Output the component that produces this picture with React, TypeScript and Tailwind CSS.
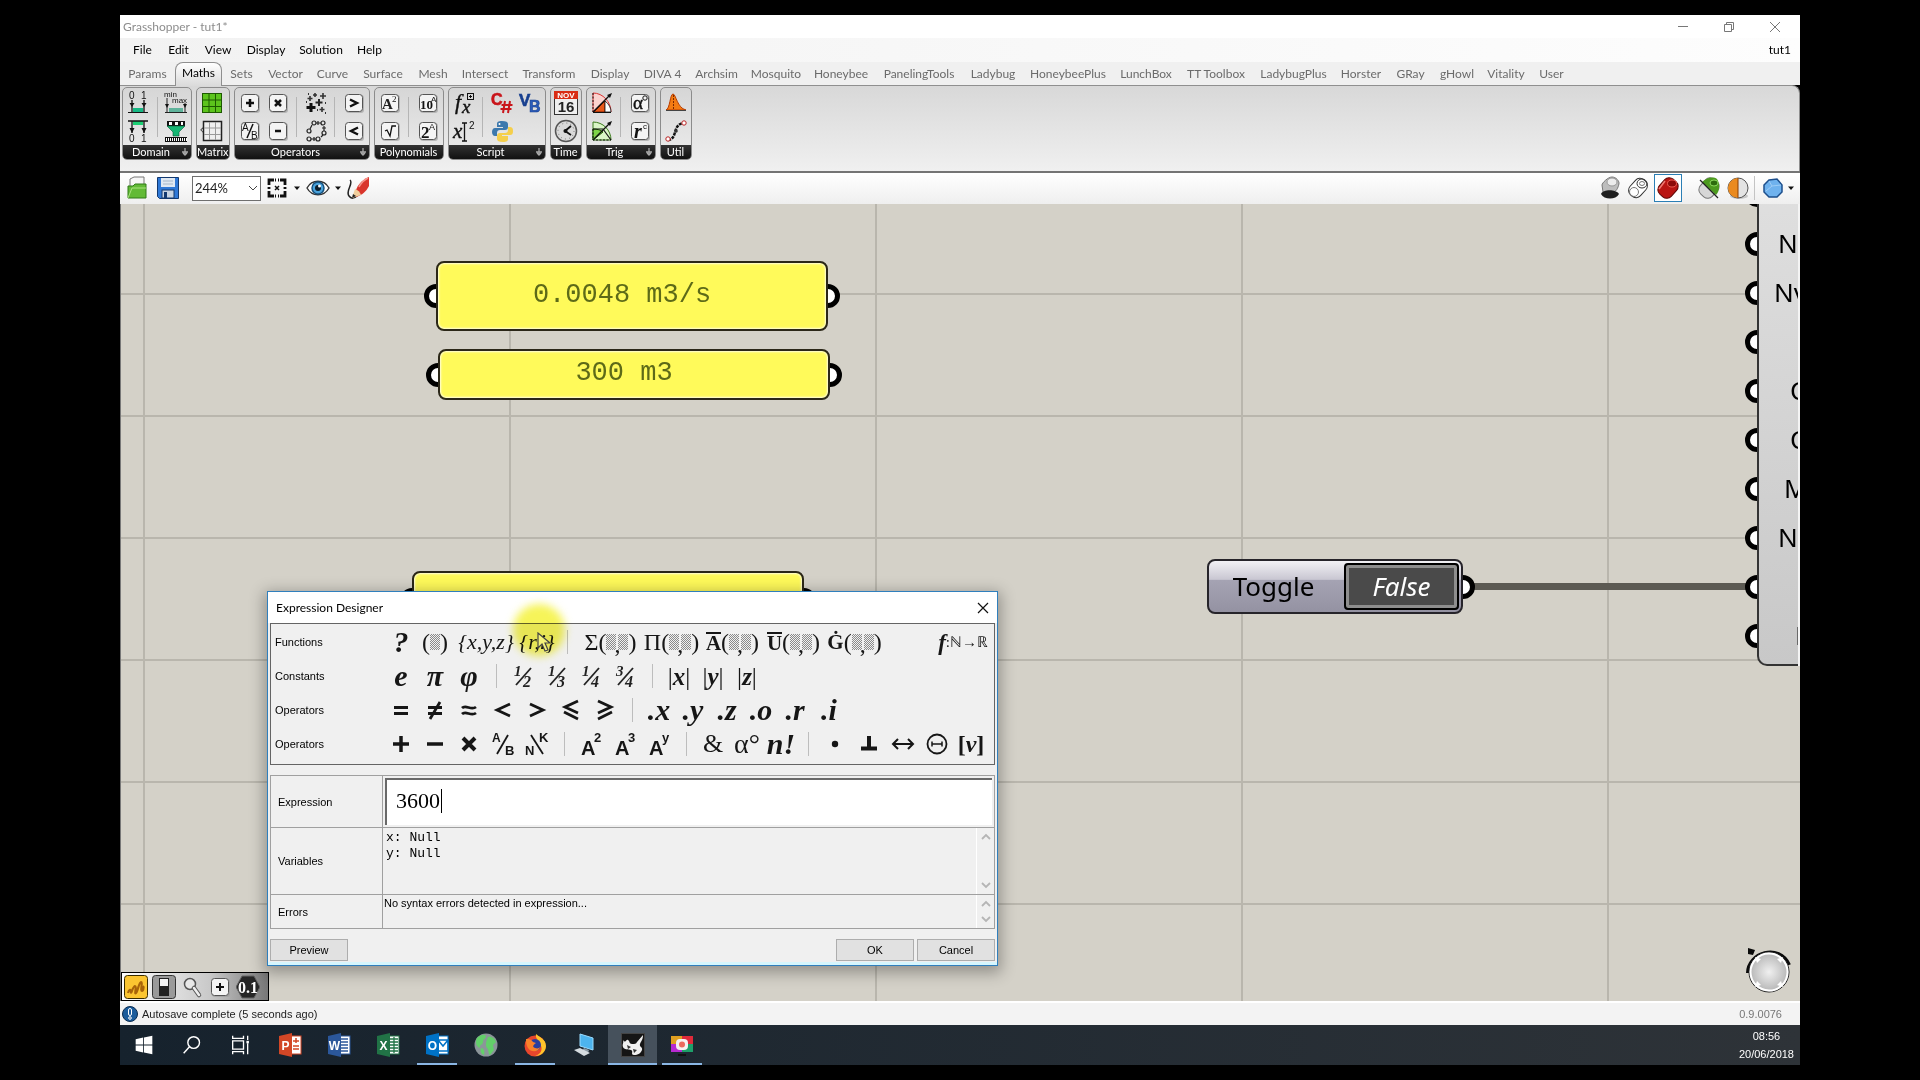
import React, { useState } from 'react';

type IconProps = { children: React.ReactNode; size?: string; box?: string };

const Icon = ({ children, size = 'h-6 w-6', box = '0 0 24 24' }: IconProps) => (
  <svg viewBox={box} className={`${size} shrink-0`} fill="none">
    {children}
  </svg>
);

const serif = '"Liberation Serif", serif';
const sans = '"Liberation Sans", sans-serif';

// raised key cap used by most of the maths components
const Cap = ({ children }: { children: React.ReactNode }) => (
  <Icon>
    <rect x="4" y="4" width="18" height="18" rx="3" fill="#9a9a9a" opacity=".6" />
    <rect x="3.5" y="3.5" width="17" height="17" rx="3" fill="#f4f4f4" stroke="#555" />
    {children}
  </Icon>
);

const icons: Record<string, React.ReactNode> = {
  domainA: (
    <Icon>
      <text x="3" y="8" fontSize="10" fill="#111" fontFamily={sans}>0</text>
      <text x="15" y="8" fontSize="10" fill="#111" fontFamily={sans}>1</text>
      <path d="M6 9v12M18 9v12" stroke="#111" strokeWidth="1.3" />
      <path d="M3.500 12h5l-2.500 4zM15.500 12h5l-2.500 4z" fill="#111" />
      <path d="M2 21.500h20" stroke="#111" />
      <rect x="7" y="17" width="10" height="4" fill="#16b884" />
    </Icon>
  ),
  domainB: (
    <Icon>
      <rect x="7" y="2" width="10" height="4" fill="#1ccf74" />
      <path d="M2 2h20M6 2v12M18 2v12" stroke="#111" strokeWidth="1.300" />
      <path d="M3.500 9h5L6 14zM15.500 9h5L18 14z" fill="#111" />
      <text x="3" y="23" fontSize="10" fill="#111" fontFamily={sans}>0</text>
      <text x="15" y="23" fontSize="10" fill="#111" fontFamily={sans}>1</text>
    </Icon>
  ),
  bounds: (
    <Icon>
      <text x="0" y="6" fontSize="8" fill="#111" fontFamily={sans}>min</text>
      <text x="8" y="12" fontSize="8" fill="#111" fontFamily={sans}>max</text>
      <path d="M3 7v14M21 12v9M1 21.500h22" stroke="#222" />
      <path d="M1 13h4l-2 4zM19 13h4l-2 4z" fill="#111" />
      <rect x="5" y="17" width="14" height="4" fill="#5fb39b" />
    </Icon>
  ),
  gate: (
    <Icon>
      <rect x="3" y="2" width="18" height="5" fill="#111" />
      <path d="M5 3h3v3H5zM11 3h3v3h-3zM17 3h2v3h-2z" fill="#fff" />
      <path d="M3 7h18l-6 6v4H9v-4z" fill="#17b774" stroke="#0b5c3a" strokeWidth=".6" />
      <path d="M1 20.500h22" stroke="#111" strokeWidth="5" />
      <path d="M2 20.500h21" stroke="#fff" strokeWidth="3" strokeDasharray="1 1" />
    </Icon>
  ),
  matrixFull: (
    <Icon>
      <rect x="2.500" y="2.500" width="19" height="19" fill="#5cc41c" stroke="#1d5a00" />
      <path d="M9 3v18M15.500 3v18M3 9h18M3 15.500h18" stroke="#1d5a00" />
    </Icon>
  ),
  matrixEmpty: (
    <Icon>
      <rect x="3.500" y="2.500" width="18" height="19" fill="#efefef" stroke="#222" strokeWidth="1.500" />
      <path d="M9.500 3v18M15.500 3v18M4 9h17M4 15.500h17" stroke="#999" />
      <path d="M3 9c-3 1-2 3 0 4" stroke="#222" />
    </Icon>
  ),
  plus: <Cap><path d="M12 8v8M8 12h8" stroke="#111" strokeWidth="2.500" /></Cap>,
  times: <Cap><path d="m9 9 6 6m0-6-6 6" stroke="#111" strokeWidth="2.500" /></Cap>,
  minus: <Cap><path d="M9 12h6" stroke="#111" strokeWidth="2.500" /></Cap>,
  greater: <Cap><path d="m8 8.500 7 3.500-7 3.500" stroke="#111" strokeWidth="2.400" /></Cap>,
  less: <Cap><path d="M16 8.500 9 12l7 3.500" stroke="#111" strokeWidth="2.400" /></Cap>,
  divide: (
    <Cap>
      <text x="4" y="12" fontSize="10" fill="#111" fontFamily={sans}>A</text>
      <text x="13" y="20" fontSize="10" fill="#111" fontFamily={sans}>B</text>
      <path d="M15 5 9 19" stroke="#111" strokeWidth="1.500" />
    </Cap>
  ),
  mass: (
    <Icon>
      <path d="M7 12v9M2.500 16.500h9" stroke="#111" strokeWidth="3" />
      <path d="M15 8v7M11.500 11.500h7" stroke="#222" strokeWidth="2" />
      <path d="M19 2v6M16 5h6M6 5v5M3.500 7.500h5M18 16v5M15.500 18.500h5M11 2v4M9 4h4" stroke="#333" strokeWidth="1.600" />
      <path d="M4 3h1M21 12h1M13 19h1M2 11h1M21 22h1" stroke="#333" strokeWidth="2" />
    </Icon>
  ),
  relative: (
    <Icon>
      <g stroke="#222" strokeWidth="1.200">
        <circle cx="5" cy="12" r="2" /><circle cx="10" cy="4" r="2" /><circle cx="19" cy="4" r="2" />
        <circle cx="20" cy="14" r="2" /><circle cx="5" cy="20" r="2" /><circle cx="14" cy="20" r="2" />
        <path d="M6 10l2-4M12 4h5M20 7v5M7 20h5M17 18l2-2M14 2v4M10 18v4M18 9h4" />
      </g>
    </Icon>
  ),
  square: (
    <Cap>
      <text x="4" y="18" fontSize="15" fontWeight="bold" fill="#222" fontFamily={serif}>A</text>
      <text x="14" y="11" fontSize="9" fill="#111" fontFamily={serif}>2</text>
    </Cap>
  ),
  root: <Cap><path d="m7 12 2-1 3 6 2-10h4" stroke="#111" strokeWidth="1.300" /></Cap>,
  ten: (
    <Cap>
      <text x="4" y="18" fontSize="13" fontWeight="bold" fill="#111" fontFamily={serif}>10</text>
      <text x="15" y="11" fontSize="8" fill="#111" fontFamily={sans}>A</text>
    </Cap>
  ),
  two: (
    <Cap>
      <text x="5" y="19" fontSize="17" fontWeight="bold" fill="#111" fontFamily={serif}>2</text>
      <text x="13" y="11" fontSize="9" fill="#111" fontFamily={sans}>A</text>
    </Cap>
  ),
  fx: (
    <Icon>
      <text x="3" y="18" fontSize="22" fontStyle="italic" fill="#111" stroke="#111" strokeWidth=".4" fontFamily={serif}>f</text>
      <text x="10" y="22" fontSize="19" fontStyle="italic" fill="#111" stroke="#111" strokeWidth=".4" fontFamily={serif}>x</text>
      <rect x="15.500" y="2.500" width="6" height="6" stroke="#111" />
      <path d="M18.500 4v3M17 5.500h3" stroke="#111" />
    </Icon>
  ),
  evalx: (
    <Icon>
      <text x="1" y="19" fontSize="21" fontStyle="italic" fill="#111" stroke="#111" strokeWidth=".4" fontFamily={serif}>x</text>
      <path d="M10 4h5M12.500 4v18M10 22h5" stroke="#111" strokeWidth="1.300" />
      <text x="17" y="10" fontSize="10" fill="#111" fontFamily={sans}>2</text>
    </Icon>
  ),
  csharp: (
    <Icon>
      <text x="1" y="14" fontSize="16" fontWeight="bold" fill="#c9151b" stroke="#c9151b" strokeWidth=".6" fontFamily={sans}>C</text>
      <path d="m15 10-2 12M20 10l-2 12M11.500 14h11M10.500 18h11" stroke="#c9151b" strokeWidth="2" />
    </Icon>
  ),
  python: (
    <Icon>
      <path d="M12 2c-4 0-5 1-5 3v3h6v1H5c-2 0-3 2-3 4s1 4 3 4h2v-3c0-2 1-3 3-3h5c2 0 3-1 3-3V5c0-2-2-3-6-3z" fill="#3d79ad" />
      <path d="M13 23c4 0 5-1 5-3v-3h-6v-1h8c2 0 3-1 3-4s-1-4-3-4h-2v3c0 2-1 3-3 3h-5c-2 0-3 1-3 3v3c0 2 2 3 6 3z" fill="#f5cf4b" />
      <circle cx="9.500" cy="5" r="1" fill="#fff" />
    </Icon>
  ),
  vb: (
    <Icon>
      <text x="1" y="15" fontSize="17" fontWeight="bold" fill="#173f8f" stroke="#173f8f" strokeWidth=".6" fontFamily={sans}>V</text>
      <text x="11" y="21" fontSize="16" fontWeight="bold" fill="#2b5cbb" stroke="#173f8f" strokeWidth=".6" fontFamily={sans}>B</text>
    </Icon>
  ),
  date: (
    <Icon>
      <rect x=".5" y=".5" width="23" height="23" fill="#efefef" stroke="#333" />
      <rect x="0" y="0" width="24" height="8" fill="#d92c14" />
      <text x="12" y="7" textAnchor="middle" fontSize="8" fontWeight="bold" fill="#fff" fontFamily={sans}>NOV</text>
      <text x="12" y="21" textAnchor="middle" fontSize="15" fontWeight="bold" fill="#222" fontFamily={sans}>16</text>
    </Icon>
  ),
  clock: (
    <Icon>
      <circle cx="12" cy="12" r="10.500" fill="#d9d9d9" stroke="#555" strokeWidth="1.500" />
      <circle cx="12" cy="12" r="8" stroke="#777" strokeDasharray="1 3.200" />
      <path d="m17 7-6 5 6 4" stroke="#111" strokeWidth="1.800" />
      <circle cx="11.500" cy="12" r="2" fill="#111" />
    </Icon>
  ),
  sinRed: (
    <Icon>
      <path d="M3 2c10 0 18 9 18 19H3z" fill="#fbd3cf" stroke="#d33" />
      <path d="M3 2v19" stroke="#111" strokeDasharray="2 1.500" />
      <path d="M4 21 15 10v11z" fill="#e8591b" stroke="#7a1c00" />
      <path d="M15 10c4 3 6 7 6 11h-6z" fill="#fff" stroke="#111" strokeWidth=".8" />
      <path d="M3 21 20 4" stroke="#111" strokeWidth="1.300" />
      <path d="m22 2-5 2 3 3z" fill="#111" />
      <path d="M3 21.500h18" stroke="#111" />
    </Icon>
  ),
  tanGreen: (
    <Icon>
      <path d="M3 3c10 0 18 8 18 18H3z" fill="#d9f5c6" stroke="#3b7a1c" />
      <path d="M3 10c4 0 8 1 10 3L3 21z" fill="#7ed348" stroke="#1d5a00" />
      <path d="M3 10h10l8 11" stroke="#111" strokeWidth="1.200" />
      <path d="M3 10v11h18" stroke="#111" strokeDasharray="2 1.500" />
      <path d="M3 21 20 4" stroke="#111" strokeWidth="1.300" />
      <path d="m22 2-5 2 3 3z" fill="#111" />
    </Icon>
  ),
  degrees: (
    <Cap>
      <text x="5" y="18" fontSize="19" fill="#111" stroke="#111" strokeWidth=".4" fontFamily={serif}>α</text>
      <circle cx="17" cy="7" r="2.200" stroke="#111" />
    </Cap>
  ),
  radians: (
    <Cap>
      <text x="6" y="19" fontSize="20" fontWeight="bold" fontStyle="italic" fill="#111" fontFamily={serif}>r</text>
      <text x="15" y="10" fontSize="8" fill="#111" fontFamily={sans}>c</text>
    </Cap>
  ),
  gauss: (
    <Icon>
      <path d="M2 19C6 18 6 3 9 3s4 14 13 16z" fill="#f47b12" stroke="#b83c00" />
      <path d="M9.500 4v15" stroke="#7a2800" strokeDasharray="2 1" />
      <path d="M2 19.500h20" stroke="#444" />
    </Icon>
  ),
  smooth: (
    <Icon>
      <path d="M4 21C14 20 8 6 19 4" stroke="#111" strokeWidth="2.500" strokeDasharray="3 1" />
      <circle cx="20" cy="4" r="2.200" fill="#fff" stroke="#b22" />
      <circle cx="12" cy="12" r="1.800" fill="#333" />
      <circle cx="4" cy="20" r="2.200" fill="#fff" stroke="#b22" />
    </Icon>
  )
};

type Group = { name: string; more?: boolean; columns: (string[] | null)[] };

// null stands for a divider between columns
const groups: Group[] = [
  { name: 'Domain', more: true, columns: [['domainA', 'domainB'], null, ['bounds', 'gate']] },
  { name: 'Matrix', columns: [['matrixFull', 'matrixEmpty']] },
  { name: 'Operators', more: true, columns: [['plus', 'divide'], ['times', 'minus'], null, ['mass', 'relative'], null, ['greater', 'less']] },
  { name: 'Polynomials', columns: [['square', 'root'], null, ['ten', 'two']] },
  { name: 'Script', more: true, columns: [['fx', 'evalx'], null, ['csharp', 'python'], ['vb']] },
  { name: 'Time', columns: [['date', 'clock']] },
  { name: 'Trig', more: true, columns: [['sinRed', 'tanGreen'], null, ['degrees', 'radians']] },
  { name: 'Util', columns: [['gauss', 'smooth']] }
];

const menus = [
  { label: 'File', width: 'w-[35px]' },
  { label: 'Edit', width: 'w-[37px]' },
  { label: 'View', width: 'w-[42px]' },
  { label: 'Display', width: 'w-[54px]' },
  { label: 'Solution', width: 'w-[56px]' },
  { label: 'Help', width: 'w-[41px]' }
];

const tabs = [
  { label: 'Params', width: 'w-[55px]' },
  { label: 'Maths', width: 'w-[47px]' },
  { label: 'Sets', width: 'w-[39px]' },
  { label: 'Vector', width: 'w-[49px]' },
  { label: 'Curve', width: 'w-[45px]' },
  { label: 'Surface', width: 'w-[56px]' },
  { label: 'Mesh', width: 'w-[44px]' },
  { label: 'Intersect', width: 'w-[60px]' },
  { label: 'Transform', width: 'w-[68px]' },
  { label: 'Display', width: 'w-[54px]' },
  { label: 'DIVA 4', width: 'w-[51px]' },
  { label: 'Archsim', width: 'w-[57px]' },
  { label: 'Mosquito', width: 'w-[62px]' },
  { label: 'Honeybee', width: 'w-[68px]' },
  { label: 'PanelingTools', width: 'w-[88px]' },
  { label: 'Ladybug', width: 'w-[60px]' },
  { label: 'HoneybeePlus', width: 'w-[90px]' },
  { label: 'LunchBox', width: 'w-[66px]' },
  { label: 'TT Toolbox', width: 'w-[74px]' },
  { label: 'LadybugPlus', width: 'w-[81px]' },
  { label: 'Horster', width: 'w-[54px]' },
  { label: 'GRay', width: 'w-[45px]' },
  { label: 'gHowl', width: 'w-[48px]' },
  { label: 'Vitality', width: 'w-[50px]' },
  { label: 'User', width: 'w-[41px]' }
];

const TitleBar = () => (
  <header className="flex h-[23px] items-center justify-between bg-white pl-[3px] text-[#8d8d8d]">
    <h1>Grasshopper - tut1*</h1>
    <div className="flex pr-[2px]">
      <button aria-label="Minimize" className="flex h-5 w-[46px] items-center justify-center">
        <Icon size="h-3 w-3" box="0 0 12 12"><path d="M1 5.500h10" stroke="#777" /></Icon>
      </button>
      <button aria-label="Restore" className="flex h-5 w-[46px] items-center justify-center">
        <Icon size="h-3 w-3" box="0 0 12 12"><path d="M1.500 3.500h7v7h-7zM3.500 3.500v-2h7v7h-2" stroke="#777" /></Icon>
      </button>
      <button aria-label="Close" className="flex h-5 w-[46px] items-center justify-center">
        <Icon size="h-3 w-3" box="0 0 12 12"><path d="m1 1 10 10m0-10L1 11" stroke="#777" /></Icon>
      </button>
    </div>
  </header>
);

const MenuBar = () => (
  <nav className="flex h-6 items-center bg-gradient-to-r from-[#f2f2f2] to-[#fdfdfd] pl-[5px] text-black">
    {menus.map((menu) => (
      <button key={menu.label} className={menu.width}>{menu.label}</button>
    ))}
    <span className="ml-auto pr-[9px]">tut1</span>
  </nav>
);

const RibbonTabs = () => {
  const [active, setActive] = useState('Maths');
  return (
    <nav className="flex h-[23px] items-end bg-[#f0f0f0]">
      {tabs.map((tab) => (
        <button
          key={tab.label}
          onClick={() => setActive(tab.label)}
          className={`shrink-0 whitespace-nowrap ${tab.width}
            ${active === tab.label
              ? 'z-10 -mb-px h-6 rounded-t-lg border border-b-0 border-[#8f8f8f] bg-gradient-to-b from-white to-[#dadada] pb-1 text-black'
              : 'h-[22px] text-[#6b6b6b]'
            }`}
        >
          {tab.label}
        </button>
      ))}
    </nav>
  );
};

const Ribbon = () => (
  <div className="flex h-[86px] gap-1 rounded-tr-lg border-t border-r border-[#8f8f8f] bg-gradient-to-b from-[#d8d8d8] to-[#f0f0f0] pt-px pl-[2px]">
    {groups.map((group) => (
      <section key={group.name} className="flex h-[73px] flex-col rounded-[5px] border border-[#8c8c8c] bg-gradient-to-b from-[#d6d6d6] to-[#ececec]">
        <div className="flex flex-1 px-px pt-px">
          {group.columns.map((column, index) =>
            column ? (
              <div key={index} className="flex w-7 flex-col">
                {column.map((name) => (
                  <button key={name} aria-label={name} className="flex h-7 items-center justify-center">
                    {icons[name]}
                  </button>
                ))}
              </div>
            ) : (
              <div key={index} className="flex w-[10px] justify-center py-2">
                <span className="w-px bg-[#b5b5b5]" />
              </div>
            )
          )}
        </div>
        <div className="relative h-[14px] rounded-b-[4px] bg-gradient-to-b from-[#333] to-[#111] text-center text-[11px] leading-[14px] text-white">
          <span className={group.more ? 'pr-3' : ''}>{group.name}</span>
          {group.more && (
            <span className="absolute top-[3px] right-0.5">
              <Icon size="h-2 w-2" box="0 0 8 8"><path d="M4 0v8M1 4h6M2 5l2 2 2-2" stroke="#aaa" strokeWidth="1.300" /></Icon>
            </span>
          )}
        </div>
      </section>
    ))}
  </div>
);

const Arrow = () => (
  <Icon size="h-2 w-2" box="0 0 8 8"><path d="M1 2.500h6L4 6z" fill="#111" /></Icon>
);

const Divider = () => <span className="h-6 w-px bg-[#c4c4c4]" />;

const CanvasToolbar = () => (
  <div className="flex h-[33px] items-center border-t-2 border-[#747474] bg-gradient-to-b from-white to-[#efefef] pb-px pl-[5px]">
    <button aria-label="Open" className="w-6">
      <Icon>
        <path d="M5 20V3l4-2h10v12" fill="#f6f6f6" stroke="#777" />
        <path d="M3 22V10h5l2-2h11v14z" fill="#62ba36" stroke="#2f7a17" />
        <path d="m3 22 4-10h14" stroke="#a9e37f" />
      </Icon>
    </button>
    <button aria-label="Save" className="ml-[7px] w-6">
      <Icon>
        <path d="M1.500 1.500h21v21h-19l-2-2z" fill="#2f78d6" stroke="#12386f" />
        <rect x="5" y="2" width="14" height="9" fill="#dfe8f2" />
        <path d="M7 5h10M7 8h10" stroke="#a5b6c8" />
        <rect x="6" y="14" width="12" height="8" fill="#c6d3e2" stroke="#12386f" />
        <rect x="8" y="16" width="3" height="6" fill="#12386f" />
      </Icon>
    </button>
    <span className="ml-[7px]"><Divider /></span>
    <div className="relative ml-[5px] flex h-[25px] w-[69px] items-center">
      <select aria-label="Zoom" defaultValue="244%" className="h-full w-full appearance-none border border-[#6f6f6f] bg-white pl-[2px] text-[13px] text-[#222]">
        <option>100%</option>
        <option>244%</option>
      </select>
      <span className="pointer-events-none absolute right-[3px]">
        <Icon size="h-2.5 w-2.5" box="0 0 10 10"><path d="m1 3 4 4 4-4" stroke="#444" /></Icon>
      </span>
    </div>
    <button aria-label="Zoom extents" className="ml-1 flex items-center gap-1">
      <Icon>
        <path d="M4 9V4h5M15 4h5v5M20 15v5h-5M9 20H4v-5M10 4h1M13 4h1M10 20h1M13 20h1M4 11v2M20 11v2" stroke="#111" strokeWidth="2.800" />
        <path d="m10 10 4 4m0-4-4 4" stroke="#111" strokeWidth="1.500" />
      </Icon>
      <Arrow />
    </button>
    <button aria-label="Named views" className="ml-[5px] flex items-center gap-1">
      <Icon>
        <path d="M1 12c5-9 17-9 22 0-5 9-17 9-22 0z" fill="#fff" stroke="#333" strokeWidth="1.400" />
        <circle cx="12" cy="12" r="6" fill="#4aa3dc" stroke="#15507c" strokeWidth="1.500" />
        <circle cx="12" cy="12" r="3" fill="#0b1d2b" />
        <circle cx="13.500" cy="10" r="1.500" fill="#fff" />
      </Icon>
      <Arrow />
    </button>
    <button aria-label="Sketch" className="ml-1 w-6">
      <Icon>
        <path d="M4 4c4 3-5 11-1 16 2 3 5 3 9-1" stroke="#222" strokeWidth="1.500" />
        <path d="M9 18c1-7 6-14 14-17v9c-3 6-7 9-13 11z" fill="#d9352c" />
        <path d="m6 22 3-9c3 1 5 3 6 6z" fill="#f2cf9d" />
        <path d="m6 22 1-4 3 2z" fill="#222" />
        <path d="M13 11c2-4 5-7 9-9" stroke="#f7938a" strokeWidth="1.500" />
      </Icon>
    </button>

    <div className="ml-auto flex items-center pr-[5px]">
      <button aria-label="No preview" className="w-7">
        <Icon>
          <path d="M4 9c0-2 6-8 10-8s7 4 7 6-2 9-6 9H5z" fill="#bdbdbd" stroke="#777" />
          <ellipse cx="14" cy="6" rx="5" ry="4" fill="#ececec" stroke="#999" />
          <path d="M3 18c2-5 15-5 18 0-3 6-15 6-18 0z" fill="#1f1f1f" />
        </Icon>
      </button>
      <button aria-label="Wireframe preview" className="w-7">
        <Icon>
          <rect x="5" y="2" width="14" height="20" rx="6" transform="rotate(42 12 12)" fill="#fff" stroke="#333" />
          <ellipse cx="16" cy="7.500" rx="5" ry="4.500" stroke="#333" />
          <ellipse cx="16" cy="7.500" rx="2.500" ry="2" stroke="#777" />
          <circle cx="8" cy="16" r="4.500" stroke="#777" />
        </Icon>
      </button>
      <button aria-label="Shaded preview" className="flex h-7 w-7 items-center justify-center border border-[#2b7fb5] bg-white">
        <Icon>
          <rect x="4" y="2" width="16" height="20" rx="6" transform="rotate(42 12 12)" fill="#b91512" stroke="#5e0504" />
          <ellipse cx="16" cy="7.500" rx="4.500" ry="3.500" fill="#8c0a08" stroke="#ee5a4f" />
          <path d="m3 13 6-8" stroke="#f07a72" strokeWidth="1.500" />
        </Icon>
      </button>
      <span className="mr-2 ml-[7px]"><Divider /></span>
      <button aria-label="Selected only" className="w-7">
        <Icon>
          <rect x="4" y="2" width="16" height="20" rx="6" transform="rotate(42 12 12)" fill="#d7d7d7" stroke="#777" />
          <path d="m5 6 14 13c4-4 4-12 1-16-4-3-11-1-15 3z" fill="#4c9a1e" />
          <ellipse cx="17" cy="7" rx="4" ry="3" fill="#2c6b0d" stroke="#8bd95c" />
          <path d="m3 4 18 18" stroke="#222" strokeWidth="1.300" />
        </Icon>
      </button>
      <button aria-label="Document preview" className="ml-px w-7">
        <Icon>
          <ellipse cx="13" cy="20" rx="9" ry="3" fill="#999" opacity=".5" />
          <circle cx="12" cy="12" r="10" fill="#e3e3e3" stroke="#555" />
          <path d="M12 2a10 10 0 0 0 0 20z" fill="#ea8a1f" />
          <path d="M12 2v20" stroke="#8a3d00" />
        </Icon>
      </button>
      <Divider />
      <button aria-label="Mesh quality" className="ml-[6px] flex items-center gap-0.5">
        <Icon>
          <path d="m8 4 8-1 5 6v7l-5 5H8l-5-5V9z" fill="#6fb2ee" stroke="#1d4f8c" strokeWidth="1.500" />
          <path d="m8 5 3 5-6 5M11 10l9-1" stroke="#9dccf6" />
        </Icon>
        <Arrow />
      </button>
    </div>
  </div>
);

// connection point on the edge of a node, half of it hidden under the node
const Grip = ({ className }: { className: string }) => (
  <span className={`absolute h-6 w-6 rounded-full border-[5px] border-black bg-white ${className}`} />
);

const Panel = ({ text, className, inner }: { text: string; className: string; inner: string }) => (
  <div className={`absolute w-[392px] ${className}`}>
    <Grip className="top-1/2 -left-3 -translate-y-1/2" />
    <Grip className="top-1/2 -right-3 -translate-y-1/2" />
    <div className={`relative h-full rounded-lg border-2 border-[#2b2718] bg-[#fffa5a] pr-5 text-center font-['Liberation_Mono',monospace] text-[27px] leading-9 text-[#5d6a18] shadow-[inset_0_0_2px_1px_#fffde0] ${inner}`}>
      {text}
    </div>
  </div>
);

const inputs = ['C', 'N', 'Nv', '', 'C', 'C', 'M', 'N', '', 'H'];
const inputIndent = ['pl-[30px]', 'pl-[19px]', 'pl-[15px]', 'pl-0', 'pl-[31px]', 'pl-[31px]', 'pl-[25px]', 'pl-[19px]', 'pl-0', 'pl-[36px]'];

const SolverNode = () => (
  <div className="absolute -top-[35px] right-0 h-[497px] w-[43px] font-['Noto_Sans',sans-serif] text-[26px] text-black">
    <div className="absolute inset-y-0 left-0 flex w-full flex-col">
      {inputs.map((_, index) => (
        <div key={index} className="relative h-[49px]">
          <Grip className="top-[14px] -left-[12px]" />
        </div>
      ))}
    </div>
    <div className="relative h-full overflow-hidden rounded-bl-[10px] border-b-2 border-l-2 border-[#333] bg-gradient-to-b from-[#e0e0e0] to-[#c8c8c8]">
      {inputs.map((label, index) => (
        <div key={index} className={`flex h-[49px] items-center ${inputIndent[index]}`}>{label}</div>
      ))}
    </div>
    <span className="absolute inset-y-0 right-0 w-0.5 bg-[#f4f4f4]" />
  </div>
);

const ToggleNode = () => (
  <div className="absolute top-[355px] right-[337px] flex h-[55px] w-64 font-['Noto_Sans',sans-serif] text-[26px]">
    <span className="absolute top-6 left-[260px] h-[7px] w-[284px] bg-[#5c5a53]" />
    <Grip className="top-4 -right-3" />
    <div className="relative flex w-full items-center rounded-lg border-2 border-[#26242a] bg-[linear-gradient(#f2f1f5,#c9c7d2_36%,#a5a3b3_38%,#9492a2)] p-[2px]">
      <span className="flex-1 pr-2 pb-0.5 text-center text-black">Toggle</span>
      <button className="h-[47px] w-[115px] rounded border-2 border-black bg-[#4a4a4a] pb-0.5 text-white italic shadow-[inset_0_0_0_3px_#8e8e8e]">False</button>
    </div>
  </div>
);

const Slot = () => (
  <span className="inline-block h-4 w-[10px] bg-[repeating-conic-gradient(#8a8a8a_0_25%,#f0f0f0_0_50%)] bg-[length:2px_2px]" />
);

const Call = ({ head }: { head: React.ReactNode }) => (
  <span className="flex items-center text-[24px] leading-none">
    {head}<span>(</span><Slot /><span className="-mx-0.5 pt-1">,</span><Slot /><span>)</span>
  </span>
);

const Stroke = ({ children }: { children: React.ReactNode }) => (
  <Icon>
    <g stroke="#161616" strokeWidth="2.800">{children}</g>
  </Icon>
);

type Tool = { name: string; glyph: React.ReactNode; width?: string };

const gap: Tool = { name: '', glyph: null };

const fraction = (top: string, bottom: string) => (
  <Icon>
    <g fontFamily={serif} fontStyle="italic" fontWeight="bold" fill="#222">
      <text x="3" y="12" fontSize="15">{top}</text>
      <text x="12" y="23" fontSize="16">{bottom}</text>
    </g>
    <path d="M20 4 5 21" stroke="#222" strokeWidth="1.800" />
  </Icon>
);

const power = (exponent: string) => (
  <Icon>
    <g fontFamily={sans} fontWeight="bold" fill="#161616">
      <text x="2" y="23" fontSize="20">A</text>
      <text x="15" y="10" fontSize="13">{exponent}</text>
    </g>
  </Icon>
);

const boldItalic = (text: string) => <b className="text-[30px] leading-none italic">{text}</b>;
const abs = (text: string) => <span className="text-[25px] leading-none">|<b className="italic">{text}</b>|</span>;

const toolRows: { label: string; tools: Tool[] }[] = [
  {
    label: 'Functions',
    tools: [
      { name: 'help', glyph: boldItalic('?') },
      { name: 'parentheses', glyph: <span className="flex items-center text-[24px] leading-none">(<Slot />)</span> },
      { name: 'point', glyph: <i className="text-[22px] leading-none">{'{x,y,z}'}</i>, width: 'w-[68px]' },
      { name: 'complex', glyph: <i className="text-[22px] leading-none">{'{r,i}'}</i> },
      { ...gap, width: 'w-[26px]' },
      { name: 'sum', glyph: <Call head="Σ" />, width: 'w-[61px]' },
      { name: 'product', glyph: <Call head="Π" />, width: 'w-[61px]' },
      { name: 'average', glyph: <Call head={<b className="border-t-2 border-[#161616] text-[21px] leading-[18px]">A</b>} />, width: 'w-[61px]' },
      { name: 'harmonic', glyph: <Call head={<b className="border-t-2 border-[#161616] text-[21px] leading-[18px]">U</b>} />, width: 'w-[61px]' },
      { name: 'geometric', glyph: <Call head={<b className="text-[21px]">Ġ</b>} />, width: 'w-[61px]' }
    ]
  },
  {
    label: 'Constants',
    tools: [
      { name: 'e', glyph: boldItalic('e') },
      { name: 'pi', glyph: boldItalic('π') },
      { name: 'phi', glyph: boldItalic('φ') },
      gap,
      { name: 'half', glyph: fraction('1', '2') },
      { name: 'third', glyph: fraction('1', '3') },
      { name: 'quarter', glyph: fraction('1', '4') },
      { name: 'three quarters', glyph: fraction('3', '4') },
      gap,
      { name: 'abs x', glyph: abs('x') },
      { name: 'abs y', glyph: abs('y') },
      { name: 'abs z', glyph: abs('z') }
    ]
  },
  {
    label: 'Operators',
    tools: [
      { name: 'equal', glyph: <Stroke><path d="M5 9.500h14M5 15.500h14" /></Stroke> },
      { name: 'not equal', glyph: <Stroke><path d="M5 9.500h14M5 15.500h14M17 4 7 21" /></Stroke> },
      { name: 'similar', glyph: <Stroke><path d="M5 10c4-4 9 3 14-1M5 16c4-4 9 3 14-1" /></Stroke> },
      { name: 'smaller', glyph: <Stroke><path d="M19 6 6 12l13 6" /></Stroke> },
      { name: 'larger', glyph: <Stroke><path d="m5 6 13 6-13 6" /></Stroke> },
      { name: 'smaller or equal', glyph: <Stroke><path d="M19 3 6 9l13 6M5 14l14 7" /></Stroke> },
      { name: 'larger or equal', glyph: <Stroke><path d="m5 3 13 6-13 6M19 14 5 21" /></Stroke> },
      gap,
      { name: 'x', glyph: boldItalic('.x') },
      { name: 'y', glyph: boldItalic('.y') },
      { name: 'z', glyph: boldItalic('.z') },
      { name: 'o', glyph: boldItalic('.o') },
      { name: 'r', glyph: boldItalic('.r') },
      { name: 'i', glyph: boldItalic('.i') }
    ]
  },
  {
    label: 'Operators',
    tools: [
      { name: 'add', glyph: <Stroke><path d="M12 4v16M4 12h16" strokeWidth="3.500" /></Stroke> },
      { name: 'subtract', glyph: <Stroke><path d="M4 12h16" strokeWidth="3.500" /></Stroke> },
      { name: 'multiply', glyph: <Stroke><path d="m6 6 12 12M18 6 6 18" strokeWidth="4" /></Stroke> },
      {
        name: 'divide',
        glyph: (
          <Icon>
            <text x="1" y="10" fontSize="12" fontWeight="bold" fill="#161616" fontFamily={sans}>A</text>
            <text x="14" y="23" fontSize="13" fontWeight="bold" fill="#161616" fontFamily={sans}>B</text>
            <path d="M17 3 6 22" stroke="#161616" strokeWidth="1.800" />
          </Icon>
        )
      },
      {
        name: 'modulus',
        glyph: (
          <Icon>
            <text x="0" y="23" fontSize="13" fontWeight="bold" fill="#161616" fontFamily={sans}>N</text>
            <text x="14" y="10" fontSize="13" fontWeight="bold" fill="#161616" fontFamily={sans}>K</text>
            <path d="m6 3 12 19" stroke="#161616" strokeWidth="1.800" />
          </Icon>
        )
      },
      gap,
      { name: 'square', glyph: power('2') },
      { name: 'cube', glyph: power('3') },
      { name: 'power', glyph: power('y') },
      gap,
      { name: 'concatenate', glyph: <span className="text-[26px] leading-none">&amp;</span> },
      { name: 'degrees', glyph: <span className="text-[28px] leading-none">α°</span> },
      { name: 'factorial', glyph: boldItalic('n!') },
      gap,
      { name: 'dot', glyph: <Icon><circle cx="12" cy="12" r="3.200" fill="#161616" /></Icon> },
      { name: 'perpendicular', glyph: <Stroke><path d="M12 4v13M4 16.500h16" strokeWidth="4" /></Stroke> },
      { name: 'distance', glyph: <Stroke><path d="M3 12h18M7 7l-5 5 5 5M17 7l5 5-5 5" strokeWidth="2" /></Stroke> },
      {
        name: 'angle',
        glyph: (
          <Icon>
            <circle cx="12" cy="12" r="9.500" stroke="#161616" strokeWidth="1.800" />
            <path d="M7 12h10M7 9.500v5M17 9.500v5" stroke="#161616" strokeWidth="1.500" />
          </Icon>
        )
      },
      { name: 'length', glyph: <b className="text-[24px] leading-none">[<i>v</i>]</b> }
    ]
  }
];

const ScrollArrows = () => (
  <div className="flex w-[18px] flex-col items-center justify-between border-l border-white py-1">
    <Icon size="h-2.5 w-2.5" box="0 0 10 10"><path d="m1 7 4-4 4 4" stroke="#b5b5b5" strokeWidth="1.800" /></Icon>
    <Icon size="h-2.5 w-2.5" box="0 0 10 10"><path d="m1 3 4 4 4-4" stroke="#b5b5b5" strokeWidth="1.800" /></Icon>
  </div>
);

const dialogButton = 'h-[22px] w-[78px] border border-[#adadad] bg-[#e1e1e1] leading-5';

const ExpressionDesigner = () => {
  const [expression, setExpression] = useState('3600');
  return (
    <section className="absolute top-[387px] left-[146px] w-[731px] border border-[#2f7fbd] bg-[#f0f0f0] font-['Liberation_Sans',sans-serif] text-[11px] text-black shadow-[0_4px_14px_3px_rgba(0,0,0,0.3)]">
      <header className="flex h-[31px] items-center justify-between bg-white px-2 font-['Lato',sans-serif] text-[12px]">
        <h2>Expression Designer</h2>
        <button aria-label="Close dialog">
          <Icon size="h-3 w-3" box="0 0 12 12"><path d="m1 1 10 10m0-10L1 11" stroke="#111" strokeWidth="1.200" /></Icon>
        </button>
      </header>
      <div className="px-[2px] pb-[3px] shadow-[inset_0_-3px_0_#d6f6fd]">
        <div className="border border-[#646464] pt-px pb-[3px]">
          {toolRows.map((row, index) => (
            <div key={index} className="flex h-[34px] items-center font-['Liberation_Serif',serif] text-[#161616]">
              <span className="w-[113px] pl-1 font-['Liberation_Sans',sans-serif] text-black">{row.label}</span>
              {row.tools.map((tool, i) =>
                tool.glyph ? (
                  <button key={i} aria-label={tool.name} className={`flex h-full items-center justify-center ${tool.width ?? 'w-[34px]'}`}>
                    {tool.glyph}
                  </button>
                ) : (
                  <span key={i} className={`flex justify-center ${tool.width ?? 'w-5'}`}>
                    <span className="h-6 w-px bg-[#bdbdbd]" />
                  </span>
                )
              )}
              {index === 0 && (
                <button aria-label="function list" className="mr-[6px] ml-auto flex items-center text-[15px] leading-none">
                  <b className="text-[23px] italic">f</b>:ℕ→ℝ
                </button>
              )}
            </div>
          ))}
        </div>

        <div className="mt-[10px] grid grid-cols-[112px_1fr] border border-[#a0a0a0]">
          <label htmlFor="expression" className="flex h-[52px] items-center border-r border-b border-[#a0a0a0] pl-[7px]">Expression</label>
          <div className="border-b border-[#a0a0a0] p-[2px]">
            <div className="flex h-full items-center border-t-2 border-l-2 border-[#696969] bg-white pb-1">
              <input
                id="expression"
                value={expression}
                onChange={(e) => setExpression(e.target.value)}
                className="w-[54px] pl-[9px] font-['Liberation_Serif',serif] text-[22px] outline-none"
              />
              <span className="h-6 w-px bg-black" />
            </div>
          </div>
          <div className="flex h-[67px] items-center border-r border-b border-[#a0a0a0] pl-[7px]">Variables</div>
          <div className="flex justify-between border-b border-[#a0a0a0] pl-[3px]">
            <pre className="pt-[2px] font-['Liberation_Mono',monospace] text-[13px] leading-4">{'x: Null\ny: Null'}</pre>
            <ScrollArrows />
          </div>
          <div className="flex h-[33px] items-center border-r border-[#a0a0a0] pl-[7px]">Errors</div>
          <div className="flex justify-between pl-px">
            <p className="leading-4">No syntax errors detected in expression...</p>
            <ScrollArrows />
          </div>
        </div>

        <div className="mt-[10px] mb-px flex gap-[3px]">
          <button className={dialogButton}>Preview</button>
          <button className={`${dialogButton} ml-auto`}>OK</button>
          <button className={dialogButton}>Cancel</button>
        </div>
      </div>

      {/* pointer with its highlight */}
      <span className="pointer-events-none absolute top-3 left-[245px] h-[52px] w-[52px] rounded-full bg-[#f4f23c]/85 mix-blend-multiply blur-[4px]" />
      <span className="pointer-events-none absolute top-10 left-[268px]">
        <Icon size="h-5 w-4" box="0 0 16 20">
          <path d="M2 1v15l4-4 3 7 3-1-3-7h5z" fill="#f4f27a" stroke="#444" strokeWidth="1.200" />
        </Icon>
      </span>
    </section>
  );
};

const WidgetBar = () => (
  <div className="absolute bottom-0 left-0 flex h-[29px] w-[148px] items-center gap-1 border border-black bg-[linear-gradient(to_right,#fff,#c9c9c9_60%,#777)] pl-[2px]">
    <button aria-label="Sketch widget">
      <Icon>
        <rect x=".5" y=".5" width="23" height="23" rx="3" fill="#fbc531" stroke="#3a2c00" />
        <path d="M4 18c1-4 3-4 3-1s2-6 4-6-1 9 1 7 3-11 5-11-1 9 1 9 1-4 2-5" stroke="#a8640a" strokeWidth="2.200" />
      </Icon>
    </button>
    <button aria-label="Profiler widget">
      <Icon>
        <rect x=".5" y=".5" width="23" height="23" rx="3" fill="#9a9a9a" stroke="#333" />
        <rect x="7" y="3" width="10" height="18" fill="#222" />
        <rect x="8" y="4" width="8" height="7" fill="#f4f4f4" />
      </Icon>
    </button>
    <button aria-label="Find">
      <Icon>
        <circle cx="10" cy="9" r="5.500" fill="#e8e8e8" stroke="#555" strokeWidth="1.500" />
        <path d="m14 13 5 7" stroke="#555" strokeWidth="4.500" strokeLinecap="round" />
        <path d="m14 13 5 7" stroke="#eee" strokeWidth="2.500" strokeLinecap="round" />
      </Icon>
    </button>
    <button aria-label="Align widget">
      <Cap><path d="M12 8v8M8 12h8" stroke="#111" strokeWidth="2" /></Cap>
    </button>
    <button aria-label="Version widget">
      <Icon>
        <path d="M6 1h12l6 11-6 11H6L0 12z" fill="#262626" stroke="#666" />
        <text x="12" y="18" textAnchor="middle" fontSize="16" fontWeight="bold" fill="#fff" fontFamily={serif}>0.1</text>
      </Icon>
    </button>
  </div>
);

const Compass = () => (
  <span className="absolute right-[7px] bottom-[6px]">
    <Icon size="h-12 w-12" box="0 0 48 48">
      <path d="M3 26C3 6 34-4 44 18" stroke="#0a0a0a" strokeWidth="4" />
      <path d="m3 1 7 2-2 5-5-1z" fill="#0a0a0a" />
      <circle cx="24" cy="25" r="20" fill="url(#dial)" stroke="#222" />
      <circle cx="24" cy="25" r="18.500" stroke="#fff" strokeWidth="2" />
      <path d="m10 10 6 2-4 4zM38 10l-6 2 4 4zM10 40l6-2-4-4zM38 40l-6-2 4-4z" fill="#fff" />
      <defs>
        <radialGradient id="dial">
          <stop offset="0" stopColor="#f0f0f0" />
          <stop offset="1" stopColor="#b4b4b4" />
        </radialGradient>
      </defs>
    </Icon>
  </span>
);

const Canvas = () => (
  <main className="relative flex-1 overflow-hidden border-l border-[#777] bg-[#d4d1c8] bg-[linear-gradient(to_right,#b9b6ad_2px,transparent_2px),linear-gradient(#b9b6ad_2px,transparent_2px)] bg-[length:366px_122px] bg-[position:22px_89px]">
    <Panel text="0.0048 m3/s" className="top-[57px] left-[315px] h-[70px]" inner="pt-[14px]" />
    <Panel text="300 m3" className="top-[145px] left-[317px] h-[51px]" inner="pt-1" />
    <Panel text="" className="top-[367px] left-[291px] h-[58px]" inner="pt-1" />
    <ToggleNode />
    <SolverNode />
    <WidgetBar />
    <Compass />
    <ExpressionDesigner />
  </main>
);

const office = (letter: string, color: string, sheet: React.ReactNode) => (
  <Icon>
    <rect x="12" y="3" width="11" height="18" fill="#fff" stroke={color} />
    {sheet}
    <path d="M1 3 14 0v24L1 21z" fill={color} />
    <text x="7.500" y="17" textAnchor="middle" fontSize="12" fontWeight="bold" fill="#fff" fontFamily={sans}>{letter}</text>
  </Icon>
);

const tasks = [
  { name: 'Start', width: 'w-12', icon: <Icon size="h-5 w-5"><path d="m2 5 9-2v8.500H2zM12 3l10-2v10.500H12zM2 12.500h9V21l-9-2zM12 12.500h10V23l-10-2z" fill="#fff" /></Icon> },
  { name: 'Search', width: 'w-12', icon: <Icon size="h-5 w-5"><circle cx="14" cy="9" r="7" stroke="#fff" strokeWidth="1.700" /><path d="m9 14-7 8" stroke="#fff" strokeWidth="1.700" /></Icon> },
  { name: 'Task view', width: 'w-[49px]', icon: <Icon size="h-5 w-5"><path d="M2 7h13v10H2zM2 1v3h13V1M2 23v-3h13v3M20 1v5M20 10v13" stroke="#fff" strokeWidth="1.600" /><path d="M18.500 7h3v3h-3z" fill="#fff" /></Icon> },
  { name: 'PowerPoint', icon: office('P', '#d24726', <path d="M15 8h6M15 13h6M15 16h6M18 5v5" stroke="#d24726" strokeWidth="1.500" />) },
  { name: 'Word', icon: office('W', '#2b579a', <path d="M14 6h7M14 9h7M14 12h7M14 15h7M14 18h7" stroke="#2b579a" strokeWidth="1.300" />) },
  { name: 'Excel', icon: office('X', '#217346', <path d="M14 6h8M14 9h8M14 12h8M14 15h8M14 18h8M18 4v16" stroke="#217346" strokeWidth="1.300" />) },
  { name: 'Outlook', open: true, icon: office('O', '#0072c6', <path d="m13 7 5 6 5-6M13 7h10v11H13" stroke="#0072c6" strokeWidth="1.500" />) },
  {
    name: 'Globe',
    icon: (
      <Icon>
        <circle cx="12" cy="12" r="11.500" fill="#8b9599" />
        <path d="M3 5c4-4 8-4 9-2 0 3-3 3-3 6s-4 2-3 6c-4-1-5-6-3-10zM14 4c4-1 7 2 8 5l-3 3 1 5-4 5c-2-1-1-5-3-7s-1-7 1-11zM7 15c3 0 4 3 3 7-3-1-4-4-3-7z" fill="#63cf6a" />
      </Icon>
    )
  },
  {
    name: 'Firefox',
    open: true,
    icon: (
      <Icon>
        <circle cx="12" cy="13" r="10.500" fill="#e8462c" />
        <path d="M13 1c3 3 10 5 10 12 0 6-5 10-11 10 7-2 8-8 5-12-1-4-5-5-4-10z" fill="#ffc32b" />
        <circle cx="12" cy="12" r="6" fill="#2b3f9e" />
        <path d="M3 6c3 0 5 0 7 3l3 1c-3 2-4 4-1 5s4 0 5-1c-1 5-9 6-12 1-2-3-2-6-2-9z" fill="#f9822a" />
      </Icon>
    )
  },
  {
    name: 'Remote desktop',
    icon: (
      <Icon>
        <path d="m8 1 13 4v12L8 13z" fill="#4db4ee" stroke="#9bdcff" />
        <path d="m12 15 5 2-1 3-6-2z" fill="#8c9aa5" />
        <path d="m2 17 6-2 10 5-6 3z" fill="#d5dbe0" />
      </Icon>
    )
  },
  {
    name: 'Rhinoceros',
    active: true,
    icon: (
      <Icon>
        <rect x=".5" y=".5" width="23" height="23" fill="#151515" stroke="#444" />
        <path d="M2 7c3 4 3-1 5 0s1 4 4 4 4 0 5-2l6-7c0 5-2 6-3 9s3 3 2 6-4 5-8 5 0-4-3-5-7 0-8-3 1-4 0-7z" fill="#f0f0f0" />
        <path d="m6 12 4 2-3 2zM12 16l4 1-3 3z" fill="#333" />
      </Icon>
    )
  },
  {
    name: 'Recorder',
    open: true,
    icon: (
      <Icon>
        <rect x="1" y="3" width="11" height="8" fill="#e0a020" /><rect x="12" y="3" width="11" height="8" fill="#e02a3a" />
        <rect x="1" y="11" width="11" height="8" fill="#b82ad0" /><rect x="12" y="11" width="11" height="8" fill="#1ea06a" />
        <rect x="6" y="6" width="12" height="11" rx="4" fill="#f6f1f0" />
        <circle cx="12" cy="11.500" r="3" fill="#ec6a5c" />
        <path d="M8 22h8" stroke="#111" strokeWidth="2" />
      </Icon>
    )
  }
];

const Taskbar = () => (
  <footer className="flex h-10 bg-gradient-to-r from-[#16222d] to-[#2e3338] text-white">
    {tasks.map((task) => (
      <button
        key={task.name}
        aria-label={task.name}
        className={`relative flex items-center justify-center ${task.width ?? 'w-[49px]'} ${task.active ? 'bg-[#46515c]' : ''}`}
      >
        {task.icon}
        {(task.open || task.active) && (
          <span className={`absolute bottom-0 h-0.5 bg-[#8ab6e4] ${task.active ? 'w-full' : 'w-10'}`} />
        )}
      </button>
    ))}
    <div className="ml-auto pt-[2px] pr-[6px] text-center font-['Liberation_Sans',sans-serif] text-[11px] leading-[18px]">
      <p>08:56</p>
      <p>20/06/2018</p>
    </div>
  </footer>
);

const StatusBar = () => (
  <div className="flex h-6 items-center gap-1 border-t-2 border-white bg-[#f3f3f3] pr-[18px] pl-[2px] font-['Liberation_Sans',sans-serif] text-[11px] text-[#222]">
    <Icon size="h-4 w-4" box="0 0 16 16">
      <circle cx="8" cy="8" r="7.500" fill="#1b5c9c" stroke="#0a2c50" />
      <rect x="6.500" y="2.500" width="3" height="7" rx="1.500" stroke="#fff" />
      <circle cx="8" cy="12" r="1.300" stroke="#fff" />
    </Icon>
    <span>Autosave complete (5 seconds ago)</span>
    <span className="ml-auto text-[#777]">0.9.0076</span>
  </div>
);

export default function App() {
  return (
    <div className="h-screen bg-black px-[6.25%] py-[15px]">
      <div className="flex h-full flex-col font-['Lato',sans-serif] text-[12px] leading-4">
        <TitleBar />
        <MenuBar />
        <RibbonTabs />
        <Ribbon />
        <CanvasToolbar />
        <Canvas />
        <StatusBar />
        <Taskbar />
      </div>
    </div>
  );
}
